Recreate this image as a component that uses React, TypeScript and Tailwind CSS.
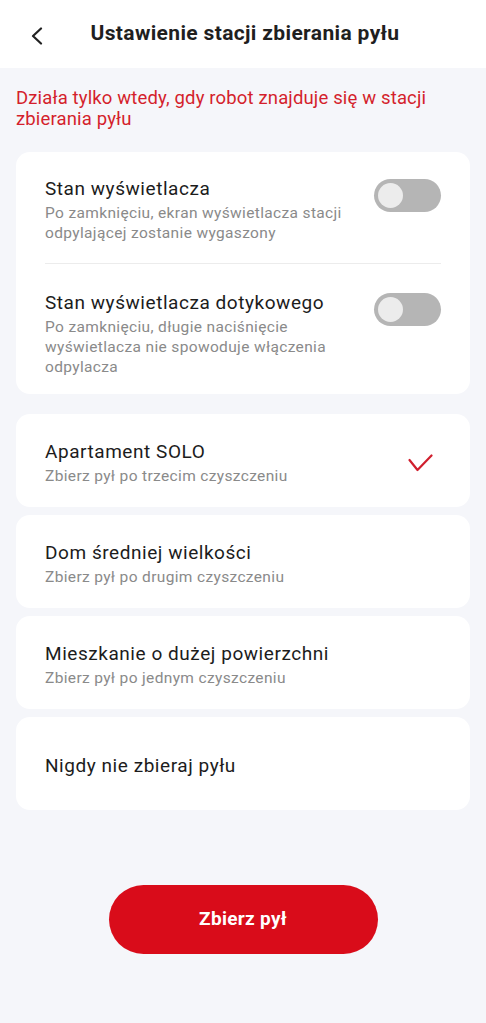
const Toggle = () => (
    <div className="w-[67px] h-[33px] rounded-full bg-[#b5b5b5] flex items-center px-[4px] shrink-0">
        <div className="w-[25px] h-[25px] rounded-full bg-[#ececec]" />
    </div>
)

const options = [
    { title: "Apartament SOLO", sub: "Zbierz pył po trzecim czyszczeniu", checked: true },
    { title: "Dom średniej wielkości", sub: "Zbierz pył po drugim czyszczeniu" },
    { title: "Mieszkanie o dużej powierzchni", sub: "Zbierz pył po jednym czyszczeniu" },
    { title: "Nigdy nie zbieraj pyłu" },
]

export default function App() {
    return (
        <div className="min-h-[1023px] w-[486px] bg-[#f5f6fa] flex flex-col font-['Roboto',sans-serif]">
            <header className="h-[68px] bg-white relative flex items-center justify-center shrink-0">
                <button className="absolute left-[30px] top-[27px] w-[14px] h-[17px] flex items-center justify-center">
                    <svg width="14" height="18" viewBox="0 0 14 18" fill="none" stroke="#222" strokeWidth="2.2" strokeLinecap="round" strokeLinejoin="round">
                        <path d="M11 1.5 L3 9 L11 16.5" />
                    </svg>
                </button>
                <h1 className="text-[21px] font-bold text-[#1f1f1f] tracking-[0.35px] pl-[4px]">Ustawienie stacji zbierania pyłu</h1>
            </header>

            <p className="px-[16px] pt-[20px] text-[18.5px] leading-[21px] tracking-[0.15px] text-[#d41f2c]">
                Działa tylko wtedy, gdy robot znajduje się w stacji zbierania pyłu
            </p>

            <div className="mx-[16px] mt-[22px] bg-white rounded-[14px] px-[29px]">
                <div className="flex items-start justify-between pt-[25px] pb-[20px] border-b border-[#ececec]">
                    <div className="pr-4">
                        <div className="text-[19px] leading-[24px] tracking-[0.55px] text-[#1c1c1c]">Stan wyświetlacza</div>
                        <div className="text-[15.5px] leading-[20px] tracking-[0.35px] text-[#8a8a8a] mt-[2px]">
                            Po zamknięciu, ekran wyświetlacza stacji odpylającej zostanie wygaszony
                        </div>
                    </div>
                    <div className="mt-[2px]"><Toggle /></div>
                </div>
                <div className="flex items-start justify-between pt-[27px] pb-[17px]">
                    <div className="pr-4 max-w-[320px]">
                        <div className="text-[19px] leading-[24px] tracking-[0.55px] text-[#1c1c1c]">Stan wyświetlacza dotykowego</div>
                        <div className="text-[15.5px] leading-[20px] tracking-[0.35px] text-[#8a8a8a] mt-[2px]">
                            Po zamknięciu, długie naciśnięcie wyświetlacza nie spowoduje włączenia odpylacza
                        </div>
                    </div>
                    <div className="mt-[2px]"><Toggle /></div>
                </div>
            </div>

            <div className="mx-[16px] mt-[20px] flex flex-col gap-[8px]">
                {options.map((o) => (
                    <div key={o.title} className="h-[93px] bg-white rounded-[14px] pl-[29px] pr-[37px] pt-[4px] flex items-center justify-between">
                        <div>
                            <div className="text-[19px] leading-[24px] tracking-[0.55px] text-[#1c1c1c]">{o.title}</div>
                            {o.sub && <div className="text-[15.5px] leading-[20px] tracking-[0.35px] text-[#8a8a8a] mt-[2px]">{o.sub}</div>}
                        </div>
                        {o.checked && (
                            <svg width="25" height="18" viewBox="0 0 25 18" fill="none" stroke="#d01f2e" strokeWidth="2.2" strokeLinecap="round" strokeLinejoin="round">
                                <path d="M1.5 6 L9.5 16 L23.5 1.5" />
                            </svg>
                        )}
                    </div>
                ))}
            </div>

            <div className="flex justify-center mt-[75px] mb-[69px]">
                <button className="w-[269px] h-[69px] rounded-full bg-[#d90c1a] text-white text-[19px] font-bold tracking-[0.3px]">
                    Zbierz pył
                </button>
            </div>
        </div>
    )
}
